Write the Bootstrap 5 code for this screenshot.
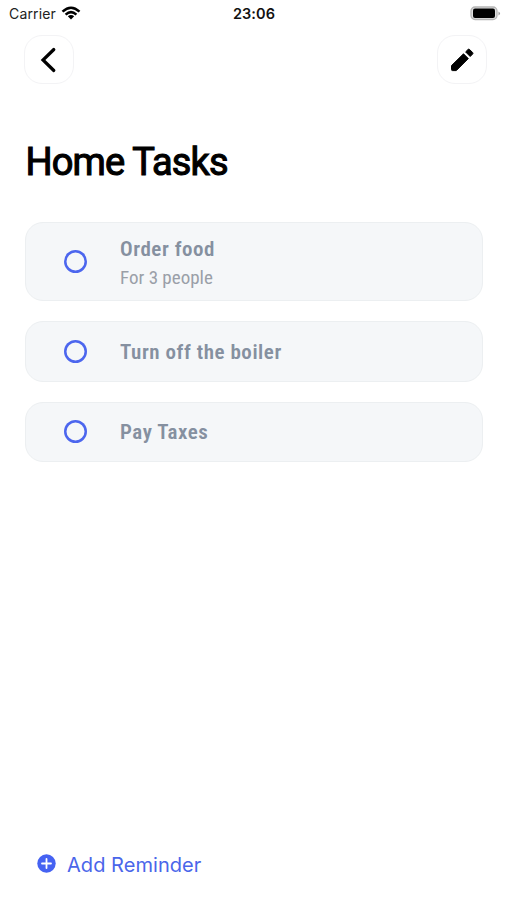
<!DOCTYPE html>
<html lang="en">
<head>
<meta charset="utf-8">
<meta name="viewport" content="width=device-width, initial-scale=1">
<title>Home Tasks</title>
<link href="https://cdn.jsdelivr.net/npm/bootstrap@5.3.0/dist/css/bootstrap.min.css" rel="stylesheet">
<style>
body{font-family:Inter,sans-serif;background:#fff;color:#000}
.screen{height:900px;overflow:hidden}
.status{height:27px;padding:0 6px 0 9px;font-size:14px;line-height:27px}
.status>div{flex:1 1 0}
.carrier{color:#222;letter-spacing:.15px}
.carrier svg{margin-left:5px}
.clock{font-weight:600;font-size:14.5px;letter-spacing:.1px;color:#111;padding-right:2px}
.tools{padding:8px 20.5px 0 23.5px}
.tool{width:50px;height:49px;border:1.5px solid #f3f3f5;border-radius:18px;background:#fff;padding:0}
.title{font:400 38px/44px Roboto,sans-serif;letter-spacing:-.85px;margin:56px 0 0 25.5px;-webkit-text-stroke:1.1px #000}
.tasks{margin:38px 24.5px 0 25px;gap:20px}
.task{height:60.5px;border:1px solid #eceff1;border-radius:18px;background:#f5f7f9;padding-left:38px}
.task.tall{height:79px}
.ring{width:23px;height:23px;box-shadow:inset 0 0 0 2.5px #4c66ee;border-radius:50%;margin-right:33px}
.label,.note{display:block;font-family:"Roboto Condensed",Roboto,sans-serif;white-space:nowrap}
.label{font-weight:600;font-size:21px;line-height:29px;padding-top:2px;letter-spacing:.55px;color:#8590a0}
.tall .label{padding-top:3px}
.note{font-size:19px;line-height:28px;letter-spacing:0;color:#9a9fa8}
.add{color:#4a66ea;font-size:20px;line-height:24px;letter-spacing:.05px;padding:0;margin:0 0 22px 36px}
.add:hover{color:#4a66ea}
.add span{padding:4px 0 0 3px}
</style>
</head>
<body>
<div class="screen d-flex flex-column">
  <div class="status d-flex align-items-center">
    <div class="carrier d-flex align-items-center">Carrier
      <svg width="20" height="15" viewBox="0 0 20 15" fill="none" stroke="#000" stroke-width="2.5"><path d="M1.5 5.6Q10-2.2 18.5 5.6M4.6 8.6Q10 3.7 15.4 8.6"/><path d="M6.8 10.3Q10 7.5 13.2 10.3L10 13.6Z" fill="#000" stroke="none"/></svg>
    </div>
    <div class="clock text-center">23:06</div>
    <div class="d-flex justify-content-end">
      <svg width="31" height="15" viewBox="0 0 31 15"><rect x="1" y="1" width="26" height="12.5" rx="4" fill="#e0e0e0" stroke="#b5b5b5" stroke-width="1.3"/><rect x="3" y="2.5" width="22" height="9.5" rx="2" fill="#000"/><path d="M28.5 5.5q3 2 0 4z" fill="#999"/></svg>
    </div>
  </div>
  <div class="tools d-flex justify-content-between">
    <button class="tool btn d-flex align-items-center justify-content-center" aria-label="Back">
      <svg width="20" height="28" viewBox="0 0 20 28" fill="none" stroke="#000" stroke-width="3.2" stroke-linecap="round" stroke-linejoin="miter"><path d="M14.8 3.5 4 14l10.8 10.5"/></svg>
    </button>
    <button class="tool btn d-flex align-items-center justify-content-center" aria-label="Edit">
      <svg width="24" height="24" viewBox="0 0 24 24" stroke="#000" stroke-width="1" stroke-linejoin="round"><path d="M1.5 17.6v4q0 1 1 1h3.8L18.3 10.6 13.5 5.8zM15.6 3.9l4.6 4.6 2.4-2.4q.8-.8 0-1.6l-3-3q-.8-.8-1.6 0z"/></svg>
    </button>
  </div>
  <h1 class="title">Home Tasks</h1>
  <div class="tasks d-flex flex-column">
    <div class="task tall d-flex align-items-center"><span class="ring"></span><div><span class="label">Order food</span><span class="note">For 3 people</span></div></div>
    <div class="task d-flex align-items-center"><span class="ring"></span><span class="label">Turn off the boiler</span></div>
    <div class="task d-flex align-items-center"><span class="ring"></span><span class="label">Pay Taxes</span></div>
  </div>
  <button class="add btn d-flex align-items-center mt-auto align-self-start">
    <svg width="19" height="19" viewBox="0 0 19 19"><circle cx="9.5" cy="9.5" r="9.2" fill="#4562f2"/><path d="M9.5 5v9M5 9.5h9" stroke="#fff" stroke-width="1.8" stroke-linecap="round"/></svg>
    <span class="ms-2">Add Reminder</span>
  </button>
</div>
<script src="https://cdn.jsdelivr.net/npm/bootstrap@5.3.0/dist/js/bootstrap.bundle.min.js"></script>
</body>
</html>
